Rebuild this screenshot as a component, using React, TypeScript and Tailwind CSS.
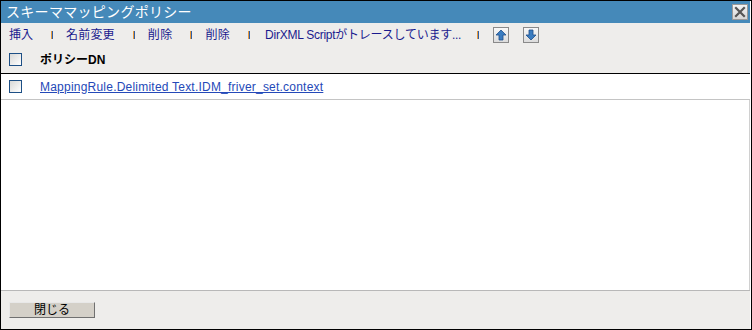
import React from "react";

const font = { fontFamily: '"Liberation Sans", "Noto Sans CJK JP", sans-serif' };

function Bar() {
  return (
    <span className="flex h-[8px]">
      <span className="h-full w-[1px] bg-[#e89a3c]" />
      <span className="h-full w-[1px] bg-[#2f5fa6]" />
    </span>
  );
}

function Sep() {
  return (
    <span className="ml-[18px] mr-[13px]">
      <Bar />
    </span>
  );
}

function Checkbox() {
  return <span className="inline-block h-[13px] w-[13px] border border-[#1d4f85] bg-gradient-to-br from-[#d8d8d6] to-[#ffffff]" />;
}

function ArrowBtn({ up }: { up: boolean }) {
  return (
    <span className="flex h-[16px] w-[16px] items-center justify-center border border-[#8a8a8a] bg-gradient-to-b from-[#f8f8f8] to-[#dcdcdc]">
      <svg width="12" height="12" viewBox="0 0 12 12">
        {up ? (
          <path d="M6 1 L11 6 L8 6 L8 11 L4 11 L4 6 L1 6 Z" fill="#3a7cc0" stroke="#1f4f8a" strokeWidth="0.8" />
        ) : (
          <path d="M6 11 L11 6 L8 6 L8 1 L4 1 L4 6 L1 6 Z" fill="#3a7cc0" stroke="#1f4f8a" strokeWidth="0.8" />
        )}
      </svg>
    </span>
  );
}

export default function App() {
  return (
    <div className="h-[330px] w-[752px] border border-black bg-white" style={font}>
      <div className="flex h-full flex-col border-r border-r-white">
        <div className="flex h-[22px] items-center justify-between bg-[#4589b9] pl-[5px] pr-[2px]">
          <span className="text-[14px] leading-none tracking-[0.3px] text-white">スキーママッピングポリシー</span>
          <span className="flex h-[16px] w-[16px] items-center justify-center border border-[#9a9a9a] bg-gradient-to-b from-[#f4f4f4] to-[#d6d6d6]">
            <svg width="12" height="12" viewBox="0 0 12 12">
              <path d="M2 2 L10 10 M10 2 L2 10" stroke="#555" strokeWidth="2.2" strokeLinecap="square" />
            </svg>
          </span>
        </div>
        <div className="flex h-[23px] items-center bg-[#eeedeb] pl-[8px] text-[12px] text-[#1a1a8e]">
          <span>挿入</span>
          <Sep />
          <span className="tracking-[0.2px]">名前変更</span>
          <Sep />
          <span className="tracking-[0.3px]">削除</span>
          <Sep />
          <span className="tracking-[0.3px]">削除</span>
          <span className="ml-[18px] mr-[15px]">
            <Bar />
          </span>
          <span className="tracking-[-0.25px]">DirXML Scriptがトレースしています...</span>
          <span className="ml-[16px] mr-[14px]">
            <Bar />
          </span>
          <ArrowBtn up />
          <span className="w-[14px]" />
          <ArrowBtn up={false} />
        </div>
        <div className="flex h-[28px] items-center border-b border-b-black bg-[#eeedeb] pl-[8px]">
          <Checkbox />
          <span className="ml-[18px] text-[12px] font-bold text-black">ポリシーDN</span>
        </div>
        <div className="flex h-[26px] items-center border-b border-b-[#c4c4c4] pl-[8px]">
          <Checkbox />
          <span className="ml-[18px] text-[12px] tracking-[0.22px] text-[#2449b8] underline">MappingRule.Delimited Text.IDM_friver_set.context</span>
        </div>
        <div className="flex-1 border-r border-r-[#d0d0d0]" />
        <div className="flex h-[39px] items-center border-t border-t-[#b8b8b8] bg-[#eeedeb] pl-[8px]">
          <button className="flex h-[16px] w-[86px] items-center justify-center border border-t-[#e8e8e8] border-l-[#e8e8e8] border-b-[#707070] border-r-[#707070] bg-[#d4d0c8] text-[12px] text-black">
            閉じる
          </button>
        </div>
      </div>
    </div>
  );
}
